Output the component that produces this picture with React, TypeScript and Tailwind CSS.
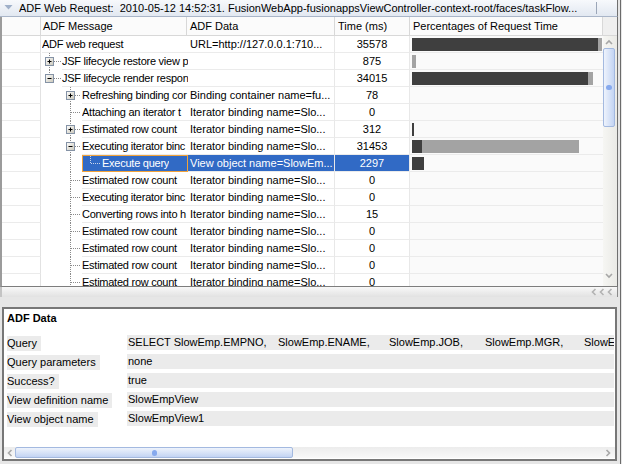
import React from 'react';

type Row = {
  lvl: number;
  exp?: '+' | '-';
  msg: string;
  data: string;
  time: string;
  dark?: number;
  gray?: number;
  sel?: boolean;
  pass: number[];
  own: 'full' | 'half' | 'none';
};

const CX = [0, 8, 29, 49];
const TX = [1, 21, 41, 61];

const rows: Row[] = [
  { lvl: 0, msg: 'ADF web request', data: 'URL=http://127.0.0.1:710...', time: '35578', dark: 186, gray: 4, pass: [], own: 'none' },
  { lvl: 1, exp: '+', msg: 'JSF lifecycle restore view p', data: '', time: '875', gray: 4, pass: [], own: 'full' },
  { lvl: 1, exp: '-', msg: 'JSF lifecycle render respon', data: '', time: '34015', dark: 176, gray: 5, pass: [], own: 'half' },
  { lvl: 2, exp: '+', msg: 'Refreshing binding cor', data: 'Binding container name=fu...', time: '78', pass: [], own: 'full' },
  { lvl: 2, msg: 'Attaching an iterator t', data: 'Iterator binding name=Slo...', time: '0', pass: [], own: 'full' },
  { lvl: 2, exp: '+', msg: 'Estimated row count', data: 'Iterator binding name=Slo...', time: '312', dark: 2, pass: [], own: 'full' },
  { lvl: 2, exp: '-', msg: 'Executing iterator binc', data: 'Iterator binding name=Slo...', time: '31453', dark: 10, gray: 157, pass: [], own: 'full' },
  { lvl: 3, msg: 'Execute query', data: 'View object name=SlowEm...', time: '2297', dark: 12, sel: true, pass: [2], own: 'half' },
  { lvl: 2, msg: 'Estimated row count', data: 'Iterator binding name=Slo...', time: '0', pass: [], own: 'full' },
  { lvl: 2, msg: 'Executing iterator binc', data: 'Iterator binding name=Slo...', time: '0', pass: [], own: 'full' },
  { lvl: 2, msg: 'Converting rows into h', data: 'Iterator binding name=Slo...', time: '15', pass: [], own: 'full' },
  { lvl: 2, msg: 'Estimated row count', data: 'Iterator binding name=Slo...', time: '0', pass: [], own: 'full' },
  { lvl: 2, msg: 'Estimated row count', data: 'Iterator binding name=Slo...', time: '0', pass: [], own: 'full' },
  { lvl: 2, msg: 'Estimated row count', data: 'Iterator binding name=Slo...', time: '0', pass: [], own: 'full' },
  { lvl: 2, msg: 'Estimated row count', data: 'Iterator binding name=Slo...', time: '0', pass: [], own: 'full' },
];

const DOT = '#8a8a8a';

function Expander({ cx, kind }: { cx: number; kind: '+' | '-' }) {
  return (
    <g>
      <rect x={cx - 3.5} y={4.5} width={8} height={8} fill="url(#expg)" stroke="#8593a6" />
      <line x1={cx - 1.5} y1={8.5} x2={cx + 2.5} y2={8.5} stroke="#000" />
      {kind === '+' && <line x1={cx + 0.5} y1={6.5} x2={cx + 0.5} y2={10.5} stroke="#000" />}
    </g>
  );
}

function Tree({ r, width }: { r: Row; width: number }) {
  const cx = CX[r.lvl];
  const tx = TX[r.lvl];
  return (
    <svg width={width} height={17} className="shrink-0 block">
      <defs>
        <linearGradient id="expg" x1="0" y1="0" x2="1" y2="1">
          <stop offset="0" stopColor="#ffffff" />
          <stop offset="1" stopColor="#c9c6b8" />
        </linearGradient>
      </defs>
      {r.pass.map((L) => (
        <line key={L} x1={CX[L] + 0.5} y1={0} x2={CX[L] + 0.5} y2={17} stroke={DOT} strokeDasharray="1 1" />
      ))}
      {!r.sel && r.lvl > 0 && r.own !== 'none' && (
        <>
          <line x1={cx + 0.5} y1={0} x2={cx + 0.5} y2={r.own === 'half' ? 9 : 17} stroke={DOT} strokeDasharray="1 1" />
          <line x1={cx + 1} y1={8.5} x2={tx - 1} y2={8.5} stroke={DOT} strokeDasharray="1 1" />
        </>
      )}
      {!r.sel && r.exp && <Expander cx={cx} kind={r.exp} />}
    </svg>
  );
}

function TRow({ r }: { r: Row }) {
  const sel = !!r.sel;
  return (
    <div className="flex h-[17px]">
      <div className="w-[39px] shrink-0 border-r border-r-[#e2e2e2] border-b border-b-[#ebebeb]" />
      <div className="w-[147px] shrink-0 flex overflow-hidden tracking-[-0.25px]">
        {sel ? (
          <>
            <Tree r={r} width={41} />
            <div className="flex-1 min-w-0 flex border border-[#f2a33a] bg-[#316ac5] text-white">
              <svg width={19} height={15} className="shrink-0 block">
                <line x1={7.5} y1={0} x2={7.5} y2={8} stroke="#c8d4ea" strokeDasharray="1 1" />
                <line x1={8} y1={7.5} x2={18} y2={7.5} stroke="#c8d4ea" strokeDasharray="1 1" />
              </svg>
              <div className="whitespace-nowrap overflow-hidden leading-[15px]">{r.msg}</div>
            </div>
          </>
        ) : (
          <>
            <Tree r={r} width={TX[r.lvl]} />
            <div className="flex-1 min-w-0 border-b border-b-[#ebebeb] whitespace-nowrap overflow-hidden leading-[16px]">
              {r.msg}
            </div>
          </>
        )}
      </div>
      <div
        className={`w-[147px] shrink-0 border-b border-b-[#ebebeb] border-r border-r-[#e8e8e8] pl-[2px] whitespace-nowrap overflow-hidden leading-[16px] ${
          sel ? 'bg-[#316ac5] text-white' : ''
        }`}
      >
        {r.data}
      </div>
      <div
        className={`w-[75px] shrink-0 border-b border-b-[#ebebeb] border-r border-r-[#e8e8e8] text-center leading-[16px] ${
          sel ? 'bg-[#316ac5] text-white' : ''
        }`}
      >
        {r.time}
      </div>
      <div className="w-[193px] shrink-0 border-b border-b-[#ebebeb] bg-[#fafafa] pt-[2px] pl-[2px] flex items-start">
        {r.dark ? <div className="h-[13px] bg-[#3f3f3f]" style={{ width: r.dark }} /> : null}
        {r.gray ? <div className="h-[13px] bg-[#a3a3a3]" style={{ width: r.gray }} /> : null}
      </div>
    </div>
  );
}

function Chevron({ dir, color = '#a6a6a6' }: { dir: 'up' | 'down' | 'left' | 'right'; color?: string }) {
  const d =
    dir === 'up'
      ? 'M1 5 L4 2 L7 5'
      : dir === 'down'
      ? 'M1 2 L4 5 L7 2'
      : dir === 'left'
      ? 'M4.5 1 L1.5 4 L4.5 7'
      : 'M1.5 1 L4.5 4 L1.5 7';
  const w = dir === 'up' || dir === 'down' ? 8 : 6;
  const h = dir === 'up' || dir === 'down' ? 7 : 8;
  return (
    <svg width={w} height={h} className="block">
      <path d={d} fill="none" stroke={color} strokeWidth={1.6} />
    </svg>
  );
}

function VScroll() {
  return (
    <div className="w-[14px] shrink-0 flex flex-col bg-linear-to-r from-[#f6f6f3] to-[#eaeae6]">
      <div className="h-[12px] flex items-center justify-center pr-[2px]">
        <Chevron dir="up" />
      </div>
      <div className="h-[79px] w-[12px] rounded-[2px] border border-[#a3b9e0] bg-linear-to-r from-[#eef3fc] to-[#c3d4f3] flex items-center justify-center">
        <div className="w-[6px] h-[5px] rounded-full bg-[#86a9ee]" />
      </div>
      <div className="flex-1" />
      <div className="h-[14px] flex items-start justify-center pr-[2px]">
        <Chevron dir="down" />
      </div>
    </div>
  );
}

const queryParts: [string, number][] = [
  ['SELECT SlowEmp.EMPNO,', 150],
  ['SlowEmp.ENAME,', 111],
  ['SlowEmp.JOB,', 96],
  ['SlowEmp.MGR,', 99],
  ['SlowEmp.HIREDATE,', 120],
];

const props: [string, React.ReactNode][] = [
  [
    'Query',
    <div className="flex">
      {queryParts.map(([t, w]) => (
        <span key={t} className="shrink-0 whitespace-nowrap" style={{ width: w }}>
          {t}
        </span>
      ))}
    </div>,
  ],
  ['Query parameters', 'none'],
  ['Success?', 'true'],
  ['View definition name', 'SlowEmpView'],
  ['View object name', 'SlowEmpView1'],
];

export default function App() {
  return (
    <div className="w-[622px] h-[464px] bg-[#e6e6e6] flex overflow-hidden font-['Liberation_Sans',Arial,sans-serif] text-[11px] text-black">
      <div className="w-[618px] shrink-0 flex flex-col">
        {/* Title bar */}
        <div className="h-[17px] shrink-0 flex items-center border-b border-b-[#a9b5c8] border-r border-r-[#6f6f6f] bg-linear-to-b from-[#f7f9fc] to-[#e2e8f1]">
          <svg width={19} height={16} className="shrink-0 block">
            <path d="M4.5 5 L12.5 5 L8.5 9.5 Z" fill="#9fb0c9" />
          </svg>
          <div className="w-[577px] shrink-0 whitespace-pre overflow-hidden leading-[16px]">
            {'ADF Web Request:  2010-05-12 14:52:31. FusionWebApp-fusionappsViewController-context-root/faces/taskFlow...'}
          </div>
          <div className="w-px h-[12px] bg-[#9ba6b8]" />
        </div>

        {/* Tree table */}
        <div className="h-[270px] shrink-0 flex flex-col border-l-2 border-l-[#9b9b9b] border-r border-r-[#6f6f6f] border-b border-b-[#7d7d7d] bg-white">
          <div className="h-[19px] shrink-0 flex border-b border-b-[#d8d8d8] bg-[#fbfbfb] leading-[18px]">
            <div className="w-[39px] border-r border-r-[#d8d8d8]" />
            <div className="w-[146px] border-r border-r-[#d8d8d8] pl-[2px]">ADF Message</div>
            <div className="w-[148px] border-r border-r-[#d8d8d8] pl-[3px]">ADF Data</div>
            <div className="w-[75px] border-r border-r-[#d8d8d8] pl-[3px]">Time (ms)</div>
            <div className="w-[193px] border-r border-r-[#d8d8d8] pl-[3px]">Percentages of Request Time</div>
            <div className="w-[14px] bg-[#efefef]" />
          </div>
          <div className="flex h-[250px]">
            <div className="w-[601px] shrink-0 overflow-hidden">
              {rows.map((r, i) => (
                <TRow key={i} r={r} />
              ))}
            </div>
            <VScroll />
          </div>
        </div>

        {/* <<< bar */}
        <div className="h-[10px] shrink-0 flex items-center justify-end pr-[4px] border-l-2 border-l-[#c4c4c4] border-r border-r-[#8a8a8a] bg-linear-to-b from-[#f8f8f8] to-[#e2e2e2]">
          <div className="flex gap-[2px]">
            <Chevron dir="left" color="#b3b3b3" />
            <Chevron dir="left" color="#b3b3b3" />
            <Chevron dir="left" color="#b3b3b3" />
          </div>
        </div>

        <div className="h-[10px] shrink-0" />

        {/* ADF Data panel */}
        <div className="ml-[2px] w-[615px] h-[154px] shrink-0 border-2 border-[#777777] bg-white flex flex-col">
          <div className="h-[18px] shrink-0 flex items-center pl-[3px] font-bold">ADF Data</div>
          <div className="mt-[8px] flex flex-col gap-[4px]">
            {props.map(([k, v]) => (
              <div key={k} className="flex h-[15px]">
                <div className="w-[123px] shrink-0 pl-[3px]">
                  <span className="inline-block h-[15px] bg-[#ebebeb] pr-[4px] leading-[15px] whitespace-nowrap">{k}</span>
                </div>
                <div className="flex-1 min-w-0 mr-[1px] bg-[#ebebeb] pl-[1px] leading-[15px] whitespace-nowrap overflow-hidden">
                  {v}
                </div>
              </div>
            ))}
          </div>
          <div className="flex-1" />
          <div className="h-[11px] shrink-0 flex items-center bg-linear-to-b from-[#ececec] to-[#f8f8f8]">
            <div className="w-[11px] flex justify-center">
              <Chevron dir="left" color="#a8a8a8" />
            </div>
            <div className="w-[278px] h-[11px] rounded-[2px] border border-[#a3b9e0] bg-linear-to-b from-[#eef3fc] to-[#c3d4f3] flex items-center justify-center">
              <div className="w-[5px] h-[6px] rounded-full bg-[#86a9ee]" />
            </div>
            <div className="flex-1" />
            <div className="w-[10px] flex justify-start">
              <Chevron dir="right" color="#a8a8a8" />
            </div>
          </div>
          <div className="h-px shrink-0" />
        </div>
      </div>
      <div className="w-[2px] shrink-0" />
      <div className="w-px shrink-0 bg-[#6b6b6b]" />
      <div className="w-px shrink-0" />
    </div>
  );
}
